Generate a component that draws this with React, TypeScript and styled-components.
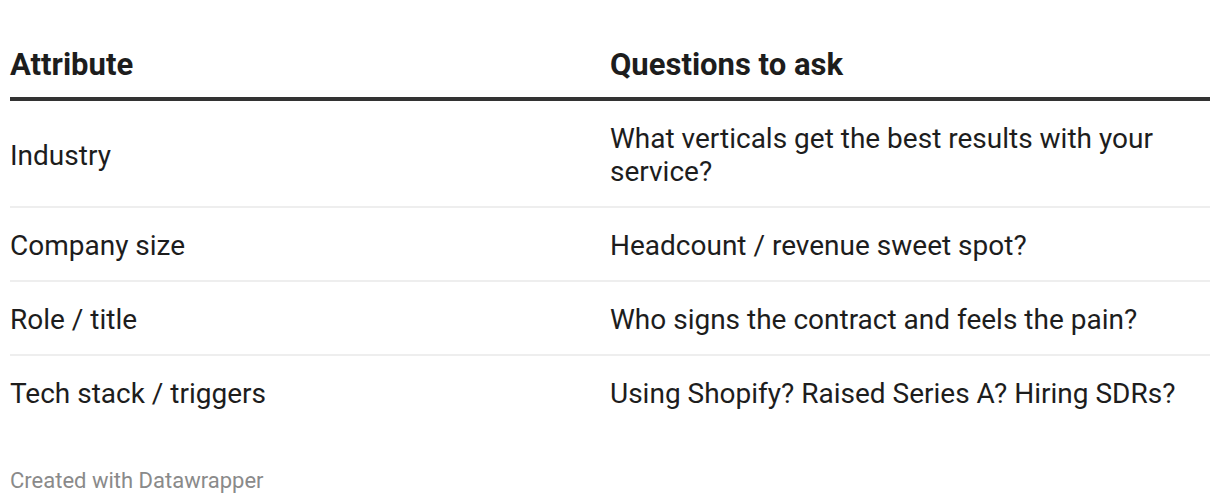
import React from "react";
import styled, { createGlobalStyle } from "styled-components";

const Global = createGlobalStyle`
  html, body { margin: 0; padding: 0; background: #fff; }
  body { font-family: Roboto, "Liberation Sans", sans-serif; color: #1d1d1d; }
`;

const Page = styled.div`
  width: 1200px;
  padding: 0 10px;
`;

const Table = styled.div`
  display: grid;
  grid-template-columns: 600px 600px;
  padding-top: 47px;
`;

const HeadCell = styled.div`
  font-size: 31px;
  font-weight: 700;
  line-height: 36px;
  padding-bottom: 14px;
  border-bottom: 4px solid #333;
`;

const Cell = styled.div<{ $last?: boolean }>`
  font-size: 28px;
  line-height: 33px;
  padding: 21px 0 18px;
  display: flex;
  align-items: center;
  border-bottom: ${(p) => (p.$last ? "none" : "2px solid #eeeeee")};
`;

const Footer = styled.div`
  margin-top: 40px;
  font-size: 22px;
  line-height: 26px;
  color: #8a8a8a;
`;

const rows = [
  ["Industry", "What verticals get the best results with your service?"],
  ["Company size", "Headcount / revenue sweet spot?"],
  ["Role / title", "Who signs the contract and feels the pain?"],
  ["Tech stack / triggers", "Using Shopify? Raised Series A? Hiring SDRs?"],
];

export default function App() {
  return (
    <Page>
      <Global />
      <Table>
        <HeadCell>Attribute</HeadCell>
        <HeadCell>Questions to ask</HeadCell>
        {rows.map((r, i) => (
          <React.Fragment key={i}>
            <Cell $last={i === rows.length - 1}>{r[0]}</Cell>
            <Cell $last={i === rows.length - 1}>{r[1]}</Cell>
          </React.Fragment>
        ))}
      </Table>
      <Footer>Created with Datawrapper</Footer>
    </Page>
  );
}
